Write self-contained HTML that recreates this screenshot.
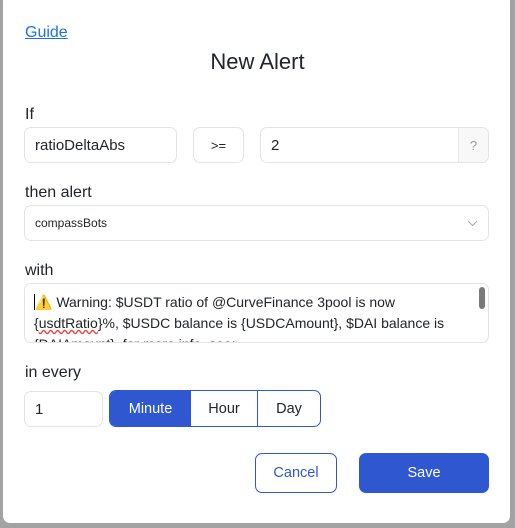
<!DOCTYPE html>
<html><head><style>
*{box-sizing:border-box;margin:0;padding:0}
body{width:515px;height:528px;background:#a3a3a3;font-family:"Liberation Sans",sans-serif;color:#212529;position:relative;overflow:hidden}
.m{position:absolute;left:3px;top:-6px;width:507px;height:529px;background:#fff;border-radius:7px}
.a{position:absolute}
.lbl{font-size:16px}
.box{border:1px solid #e3e3e3;border-radius:7px;background:#fff;font-size:15px;display:flex;align-items:center}
</style></head><body>
<div class="m"></div>
<div class="a" style="left:25px;top:24px;font-size:16px;color:#1a73e8;text-decoration:underline">Guide</div>
<div class="a" style="left:0;width:515px;top:49px;text-align:center;font-size:22px">New Alert</div>
<div class="a lbl" style="left:25px;top:106px">If</div>
<div class="a box" style="left:24px;top:127px;width:153px;height:36px;padding-left:10px">ratioDeltaAbs</div>
<div class="a box" style="left:193px;top:127px;width:51px;height:36px;justify-content:center;font-size:13px">&gt;=</div>
<div class="a box" style="left:260px;top:127px;width:229px;height:36px;padding-left:10px;overflow:hidden">2<div style="position:absolute;right:0;top:0;width:30px;height:34px;background:#f8f8f8;border-left:1px solid #e6e6e6;color:#999;font-size:13px;display:flex;align-items:center;justify-content:center">?</div></div>
<div class="a lbl" style="left:25px;top:184px">then alert</div>
<div class="a box" style="left:24px;top:205px;width:465px;height:36px;padding-left:10px;font-size:12px">compassBots
<svg style="position:absolute;right:10px;top:14px" width="11" height="7" viewBox="0 0 11 7"><path d="M1 1l4.5 4.5L10 1" fill="none" stroke="#aaa" stroke-width="1"/></svg></div>
<div class="a lbl" style="left:25px;top:262px">with</div>
<div class="a box" style="left:24px;top:283px;width:465px;height:60px;display:block;overflow:hidden;padding:8px 20px 0 9px;font-size:14px;line-height:21px">
<span style="border-left:1px solid #000">⚠️</span> Warning: $USDT ratio of @CurveFinance 3pool is now {<span style="text-decoration:underline wavy #e44">usdtRatio</span>}%, $USDC balance is {USDCAmount}, $DAI balance is {DAIAmount}, for more info, see:
<div style="position:absolute;right:3px;top:3px;width:6px;height:22px;background:#7a7a7a;border-radius:3px"></div></div>
<div class="a lbl" style="left:25px;top:364px">in every</div>
<div class="a box" style="left:24px;top:391px;width:79px;height:36px;padding-left:10px">1</div>
<div class="a" style="left:109px;top:390px;width:212px;height:37px;border:1px solid #2f57cf;border-radius:7px;overflow:hidden;display:flex;font-size:14.5px">
<div style="width:81px;background:#2f57cf;color:#fff;display:flex;align-items:center;justify-content:center">Minute</div>
<div style="width:67px;border-right:1px solid #2f57cf;display:flex;align-items:center;justify-content:center">Hour</div>
<div style="flex:1;display:flex;align-items:center;justify-content:center">Day</div></div>
<div class="a" style="left:255px;top:453px;width:82px;height:40px;border:1px solid #2f57cf;border-radius:7px;color:#2f57cf;font-size:14.5px;display:flex;align-items:center;justify-content:center">Cancel</div>
<div class="a" style="left:359px;top:453px;width:130px;height:40px;background:#2f57cf;border-radius:7px;color:#fff;font-size:14.5px;display:flex;align-items:center;justify-content:center">Save</div>
</body></html>
